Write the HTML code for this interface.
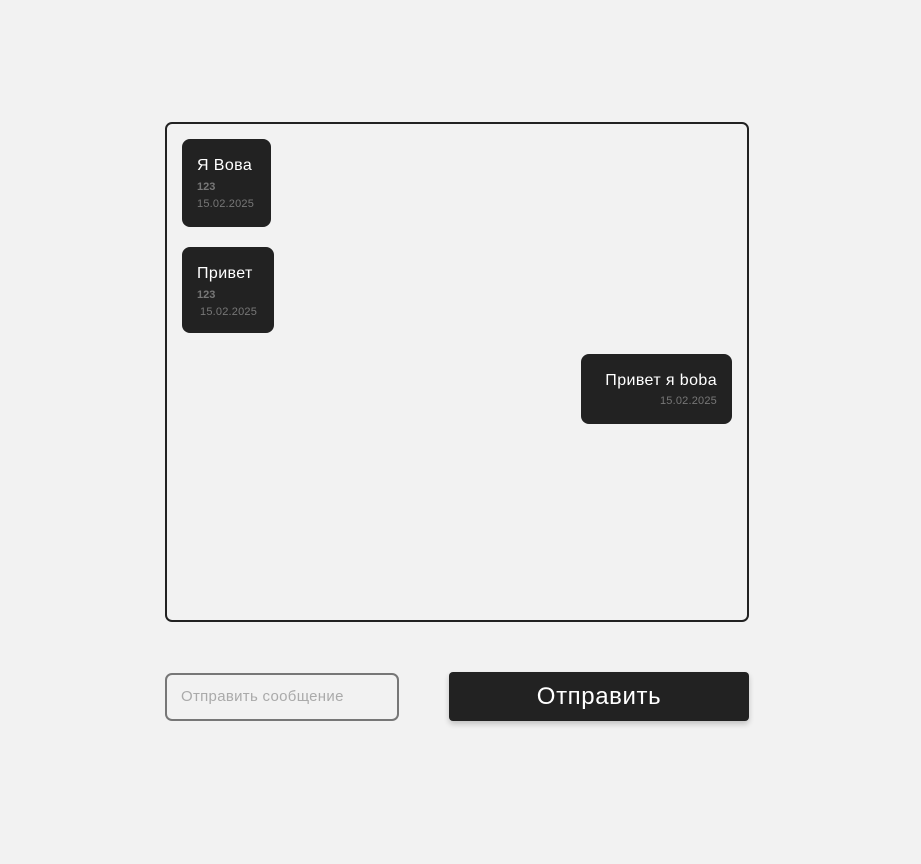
<!DOCTYPE html>
<html><head><meta charset="utf-8"><style>
body{margin:0;width:921px;height:864px;background:#f2f2f2;font-family:"Liberation Sans",sans-serif;position:relative;overflow:hidden}
.box{position:absolute;left:165px;top:122px;width:580px;height:496px;border:2px solid #222;border-radius:7px}
.m{position:absolute;background:#222;border-radius:8px;color:#fff;box-sizing:border-box}
.t{font-size:16px;letter-spacing:0.4px;position:absolute;white-space:nowrap}
.n{font-size:11px;font-weight:bold;color:#777;position:absolute}
.d{font-size:11px;letter-spacing:0.2px;color:#777;position:absolute;white-space:nowrap}
.in{position:absolute;left:165px;top:673px;width:234px;height:48px;border:2px solid #777;border-radius:7px;box-sizing:border-box;color:#aaa;font-size:15px;letter-spacing:0.3px;padding:13px 0 0 14px}
.btn{position:absolute;left:449px;top:672px;width:300px;height:49px;background:#222;border-radius:4px;color:#fff;font-size:24px;letter-spacing:0.6px;text-align:center;line-height:49px;box-shadow:0 3px 6px rgba(0,0,0,.2)}
</style></head><body>
<div class="box"></div>
<div class="m" style="left:182px;top:139px;width:89px;height:88px">
<div class="t" style="left:15px;top:18px">Я Вова</div>
<div class="n" style="left:15px;top:42px">123</div>
<div class="d" style="left:15px;top:59px">15.02.2025</div></div>
<div class="m" style="left:182px;top:247px;width:92px;height:86px">
<div class="t" style="left:15px;top:18px">Привет</div>
<div class="n" style="left:15px;top:42px">123</div>
<div class="d" style="left:18px;top:59px">15.02.2025</div></div>
<div class="m" style="left:581px;top:354px;width:151px;height:70px">
<div class="t" style="right:15px;top:18px">Привет я boba</div>
<div class="d" style="right:15px;top:41px">15.02.2025</div></div>
<div class="in">Отправить сообщение</div>
<div class="btn">Отправить</div>
</body></html>
